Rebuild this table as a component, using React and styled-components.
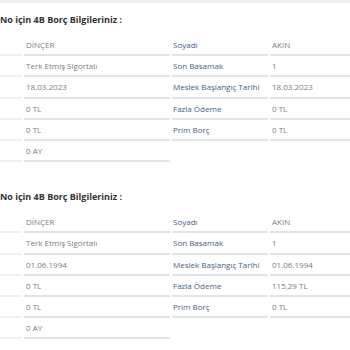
import React from 'react';
import styled, { createGlobalStyle } from 'styled-components';

const Global = createGlobalStyle`
  html, body { margin: 0; padding: 0; background: #fff; }
  body { font-family: "Open Sans", "Liberation Sans", sans-serif; overflow: hidden; }
`;

const Page = styled.div`
  width: 350px;
  height: 350px;
  overflow: hidden;
  border-top: 3px solid #efefef;
  box-sizing: border-box;
`;

const Section = styled.section`
  padding-top: ${p => p.top}px;
`;

const Title = styled.h3`
  margin: 0 0 8px 0;
  font-size: 9px;
  line-height: 14px;
  font-weight: 700;
  color: #333;
  white-space: nowrap;
`;

const Grid = styled.div`
  display: grid;
  grid-template-columns: 22px 146px 96px 80px;
  column-gap: 2px;
  align-items: start;
`;

const Cell = styled.div`
  height: 19.2px;
  line-height: 19.2px;
  border-bottom: 2px solid ${p => (p.faint ? '#eef1f4' : '#dfe5eb')};
  font-size: 8px;
  white-space: nowrap;
  overflow: hidden;
  color: ${p => (p.label ? '#46637f' : '#7c7c7c')};
  padding-left: ${p => p.pad || 0}px;
  ${p => p.empty && 'border-bottom-color: transparent;'}
`;

const data = [
  [
    ['DİNÇER', 'Soyadı', 'AKIN'],
    ['Terk Etmiş Sigortalı', 'Son Basamak', '1'],
    ['18.03.2023', 'Meslek Başlangıç Tarihi', '18.03.2023'],
    ['0 TL', 'Fazla Ödeme', '0 TL'],
    ['0 TL', 'Prim Borç', '0 TL'],
    ['0 AY', null, null],
  ],
  [
    ['DİNÇER', 'Soyadı', 'AKIN'],
    ['Terk Etmiş Sigortalı', 'Son Basamak', '1'],
    ['01.06.1994', 'Meslek Başlangıç Tarihi', '01.06.1994'],
    ['0 TL', 'Fazla Ödeme', '115,29 TL'],
    ['0 TL', 'Prim Borç', '0 TL'],
    ['0 AY', null, null],
  ],
];

function Block({ rows, top }) {
  return (
    <Section top={top}>
      <Title>No için 4B Borç Bilgileriniz :</Title>
      <Grid>
        {rows.map((r, i) => (
          <React.Fragment key={i}>
            <Cell faint />
            <Cell pad={2}>{r[0]}</Cell>
            {r[1] ? <Cell label pad={1}>{r[1]}</Cell> : <Cell empty />}
            {r[2] ? <Cell pad={2}>{r[2]}</Cell> : <Cell empty />}
          </React.Fragment>
        ))}
      </Grid>
    </Section>
  );
}

export default function App() {
  return (
    <Page>
      <Global />
      <Block rows={data[0]} top={10} />
      <Block rows={data[1]} top={28} />
    </Page>
  );
}
